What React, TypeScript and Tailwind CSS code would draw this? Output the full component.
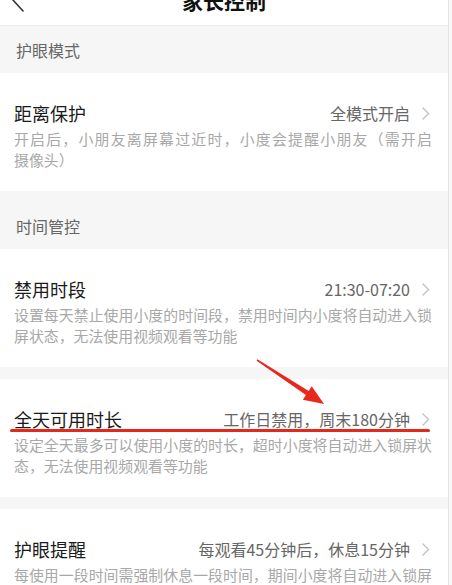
import React from "react";

type Item = {
  title: string;
  value: string;
  desc: string[];
};

const Chevron = () => (
  <svg width="8" height="13" viewBox="0 0 8 13" fill="none" className="ml-3 mr-[2px] shrink-0">
    <path d="M1 1l5.5 5.5L1 12" stroke="#c2c2c2" strokeWidth="1.4" strokeLinecap="round" strokeLinejoin="round" />
  </svg>
);

const SettingCard = ({ item }: { item: Item }) => (
  <div className="bg-white pl-[14px] pr-4 pt-[28px] pb-[21px]">
    <div className="flex h-6 items-center justify-between">
      <span className="text-[18px] text-[#1a1a1a]">{item.title}</span>
      <div className="flex items-center">
        <span className="text-[16px] text-[#666]">{item.value}</span>
        <Chevron />
      </div>
    </div>
    <div className="mt-[3px] text-[14.9px] leading-[21px] text-[#a8a8a8]">
      {item.desc.map((line, i) => (
        <div
          key={i}
          className={i < item.desc.length - 1 ? "whitespace-nowrap text-justify [text-align-last:justify]" : ""}
        >
          {line}
        </div>
      ))}
    </div>
  </div>
);

const SectionHeader = ({ label, top }: { label: string; top?: boolean }) => (
  <div
    className={`flex items-center bg-[#f6f6f6] pl-4 text-[16px] text-[#666] ${
      top ? "h-[47px]" : "h-[58px] pt-3"
    }`}
  >
    {label}
  </div>
);

export default function App() {
  const eyeCare: Item[] = [
    {
      title: "距离保护",
      value: "全模式开启",
      desc: ["开启后，小朋友离屏幕过近时，小度会提醒小朋友（需开启", "摄像头）"],
    },
  ];

  const timeControl: Item[] = [
    {
      title: "禁用时段",
      value: "21:30-07:20",
      desc: ["设置每天禁止使用小度的时间段，禁用时间内小度将自动进入锁", "屏状态，无法使用视频观看等功能"],
    },
    {
      title: "全天可用时长",
      value: "工作日禁用，周末180分钟",
      desc: ["设定全天最多可以使用小度的时长，超时小度将自动进入锁屏状", "态，无法使用视频观看等功能"],
    },
    {
      title: "护眼提醒",
      value: "每观看45分钟后，休息15分钟",
      desc: ["每使用一段时间需强制休息一段时间，期间小度将自动进入锁屏", "状态，无法使用视频观看等功能"],
    },
  ];

  return (
    <div
      className="relative flex h-[585px] w-[452px] overflow-hidden bg-white"
      style={{ fontFamily: '"Noto Sans CJK SC", "Noto Sans", sans-serif' }}
    >
      <div className="w-[448px] shrink-0">
        {/* top bar, scrolled partly out of view */}
        <div className="h-[26px] overflow-hidden border-b border-[#ededed] bg-white">
          <div className="relative -mt-[21px] flex h-[44px] items-center justify-center">
            <svg width="14" height="26" viewBox="0 0 14 26" fill="none" className="absolute left-[11px] top-[8px]">
              <path d="M12 1L1.5 12.5 12 24" stroke="#333" strokeWidth="1.6" strokeLinecap="round" strokeLinejoin="round" />
            </svg>
            <span className="text-[21px] font-bold text-[#111]">家长控制</span>
          </div>
        </div>

        <SectionHeader label="护眼模式" top />
        {eyeCare.map((item) => (
          <SettingCard key={item.title} item={item} />
        ))}

        <SectionHeader label="时间管控" />
        {timeControl.map((item, i) => (
          <React.Fragment key={item.title}>
            {i > 0 && <div className="h-3 bg-[#f6f6f6]" />}
            <SettingCard item={item} />
          </React.Fragment>
        ))}
      </div>
      <div className="w-px shrink-0 bg-[#e4e4e4]" />
      <div className="flex-1 bg-[#f8f8f8]" />

      {/* red annotation: underline + arrow */}
      <div className="pointer-events-none absolute left-[10px] top-[429px] h-[3px] w-[420px] rounded-full bg-[#e4291c]" />
      <svg className="pointer-events-none absolute left-0 top-0" width="452" height="585" viewBox="0 0 452 585">
        <polygon
          points="257.4,359.3 308.7,390.9 311.7,386.3 324,404 302.9,399.7 305.9,395.1 256.6,360.7"
          fill="#e8281c"
        />
      </svg>
    </div>
  );
}
